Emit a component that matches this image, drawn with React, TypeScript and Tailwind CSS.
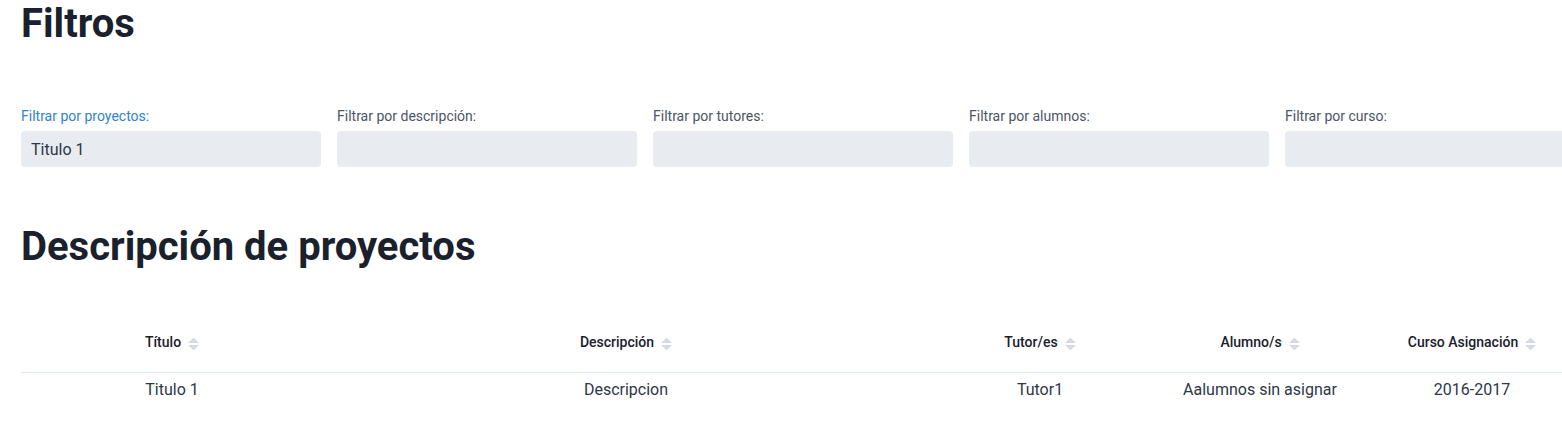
import { useState } from 'react';

const filters = [
  'Filtrar por proyectos:',
  'Filtrar por descripción:',
  'Filtrar por tutores:',
  'Filtrar por alumnos:',
  'Filtrar por curso:',
];

const columns = [
  { label: 'Título', w: 'w-[302px]' },
  { label: 'Descripción', w: 'w-[606px]' },
  { label: 'Tutor/es', w: 'w-[222px]' },
  { label: 'Alumno/s', w: 'w-[218px]' },
  { label: 'Curso Asignación', w: 'w-[206px]' },
];

const rows = [['Titulo 1', 'Descripcion', 'Tutor1', 'Aalumnos sin asignar', '2016-2017']];

function SortIcon() {
  return (
    <svg viewBox="0 0 10 14" className="ml-[7px] inline-block h-[16px] w-[11px] align-middle" fill="#d5dbe3">
      <path d="M5 1 L10 6.2 H0 Z" />
      <path d="M5 13 L10 7.8 H0 Z" />
    </svg>
  );
}

export default function App() {
  const [values, setValues] = useState(['Titulo 1', '', '', '', '']);

  return (
    <div className="w-full overflow-hidden bg-white pl-[21px] font-['Roboto',sans-serif] text-[#1a202c]">
      <h1 className="text-[40px] font-bold leading-[48px]">Filtros</h1>

      <div className="mt-[58px] flex gap-4">
        {filters.map((f, i) => (
          <div key={f} className="flex w-[300px] shrink-0 flex-col">
            <label className={`text-[14px] leading-5 ${i === 0 ? 'text-[#3182ce]' : 'text-[#4a5568]'}`}>{f}</label>
            <input
              autoFocus={i === 0}
              value={values[i]}
              onChange={(e) => setValues(values.map((v, j) => (j === i ? e.target.value : v)))}
              className="mt-[5px] h-9 rounded bg-[#e8ebef] px-[10px] text-[16px] text-[#2d3748] caret-[#1a202c] outline-none"
            />
          </div>
        ))}
      </div>

      <h2 className="mt-[56px] text-[40px] font-bold leading-[48px]">Descripción de proyectos</h2>

      <table className="mt-[43px] w-[1554px] table-fixed border-collapse">
        <thead>
          <tr>
            {columns.map((c) => (
              <th key={c.label} className={`${c.w} h-[58px] text-center text-[14px] font-medium text-[#1a202c]`}>
                {c.label}
                <SortIcon />
              </th>
            ))}
          </tr>
        </thead>
        <tbody>
          {rows.map((r) => (
            <tr key={r[0]} className="border-t border-[#e2e8f0]">
              {r.map((cell, i) => (
                <td key={i} className="h-[36px] text-center text-[16px] text-[#2d3748]">
                  {cell}
                </td>
              ))}
            </tr>
          ))}
        </tbody>
      </table>
    </div>
  );
}
